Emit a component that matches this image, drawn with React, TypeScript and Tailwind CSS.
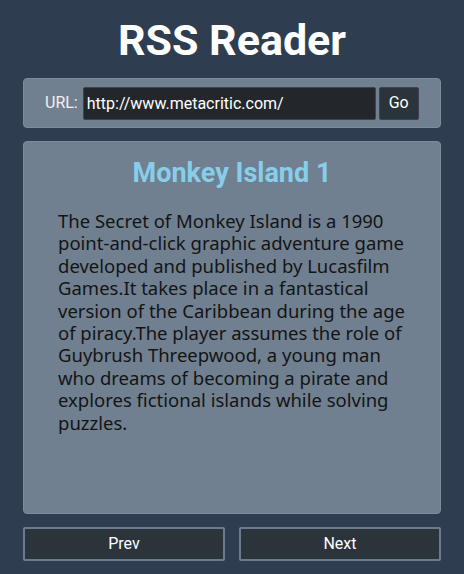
export default function App() {
  return (
    <div className="min-h-[574px] w-full bg-[#2e3e50] px-[23px] pt-[12px] font-['Roboto',sans-serif]">
      <h1 className="text-center text-[43px] font-bold leading-[56px] text-white">RSS Reader</h1>

      {/* URL bar */}
      <div className="mt-[10px] flex h-[50px] items-center rounded-[4px] border border-[#7d8c9b] bg-[#708090] pl-[21px] pr-[21px]">
        <span className="mr-[5px] text-[16px] text-[#f0f0f0]">URL:</span>
        <input
          type="text"
          defaultValue="http://www.metacritic.com/"
          className="h-[33px] w-[293px] rounded-[2px] border border-[#3b4550] bg-[#23272b] px-[3px] text-[16px] text-white outline-none"
        />
        <button
          type="button"
          className="ml-[3px] h-[33px] w-[40px] rounded-[2px] border border-[#3b4550] bg-[#2b333b] text-[16px] text-white"
        >
          Go
        </button>
      </div>

      {/* Article */}
      <div className="mt-[13px] h-[373px] rounded-[4px] border border-[#7d8c9b] bg-[#708090] px-[34px] pt-[13px]">
        <h2 className="text-center text-[27px] font-bold leading-[36px] text-[#87ceeb]">Monkey Island 1</h2>
        <p className="mt-[19px] font-['Noto_Sans',sans-serif] text-[18.5px] leading-[22.4px] text-[#141414]">
          The Secret of Monkey Island is a 1990 point-and-click graphic adventure game developed and published by
          Lucasfilm Games.It takes place in a fantastical version of the Caribbean during the age of piracy.The
          player assumes the role of Guybrush Threepwood, a young man who dreams of becoming a pirate and explores
          fictional islands while solving puzzles.
        </p>
      </div>

      {/* Pager */}
      <div className="mt-[13px] flex justify-between">
        <button
          type="button"
          className="h-[34px] w-[202px] rounded-[2px] border-2 border-[#6c7c8d] bg-[#2b333b] text-[16px] text-white"
        >
          Prev
        </button>
        <button
          type="button"
          className="h-[34px] w-[202px] rounded-[2px] border-2 border-[#6c7c8d] bg-[#2b333b] text-[16px] text-white"
        >
          Next
        </button>
      </div>
    </div>
  );
}
